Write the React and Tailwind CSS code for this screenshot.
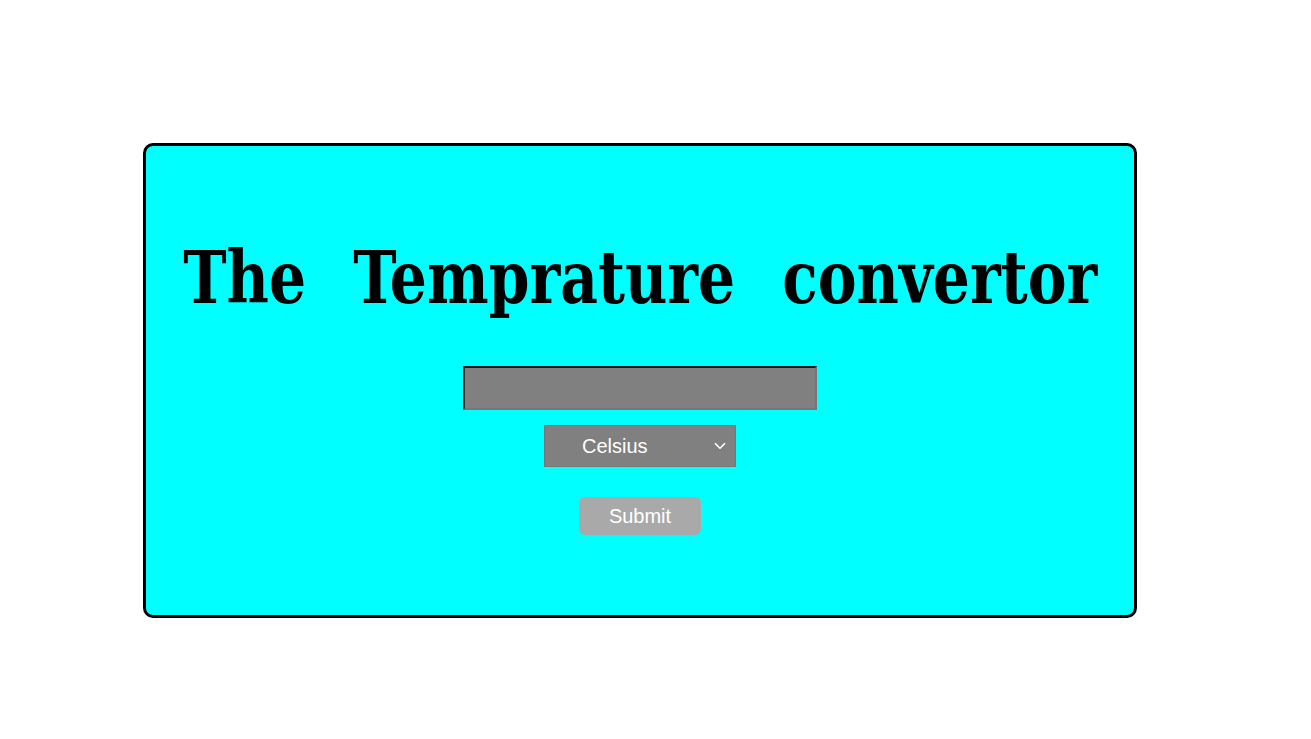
import { ChevronDown } from 'lucide-react';

export default function App() {
  return (
    <div className="min-h-[739px] bg-white pt-[143px] pl-[143px]">
      <div className="w-[994px] h-[475px] rounded-[10px] border-[3px] border-black bg-[#00ffff] flex flex-col items-center pt-[88px]">
        <h1 className="font-['DejaVu_Serif',serif] font-bold text-[72px] leading-[88px] text-black [word-spacing:33px] whitespace-nowrap [transform:scaleX(0.81)]">
          The Temprature convertor
        </h1>
        <input
          type="text"
          className="mt-[44px] w-[354px] h-[44px] bg-[#808080] border-2 border-t-[#1b1b1b] border-l-[#1b1b1b] border-b-[#767676] border-r-[#767676] outline-none"
        />
        <div className="relative mt-[15px] w-[192px] h-[42px]">
          <select className="appearance-none w-full h-full bg-[#808080] border border-[#767676] text-white text-[20px] font-['Liberation_Sans',Arial,sans-serif] pl-[37px] outline-none">
            <option>Celsius</option>
            <option>Fahrenheit</option>
            <option>Kelvin</option>
          </select>
          <ChevronDown className="pointer-events-none absolute right-[7px] top-[12px] w-[18px] h-[18px] text-white" strokeWidth={2.25} />
        </div>
        <button className="mt-[30px] w-[122px] h-[38px] rounded-[6px] bg-[#a9a9a9] text-white text-[20px] font-['Liberation_Sans',Arial,sans-serif]">
          Submit
        </button>
      </div>
    </div>
  );
}
